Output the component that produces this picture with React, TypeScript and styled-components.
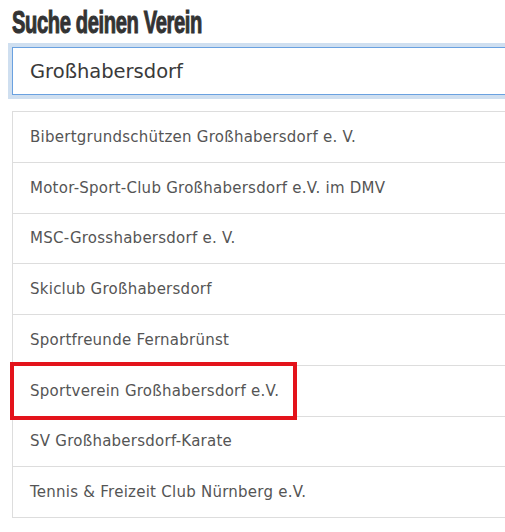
import React from 'react'
import styled, { createGlobalStyle } from 'styled-components'

const GlobalStyle = createGlobalStyle`
  html, body {
    margin: 0;
    padding: 0;
    background: #ffffff;
    overflow: hidden;
  }
`

const Page = styled.div`
  width: 505px;
  height: 532px;
  padding: 6px 0 0 12px;
  box-sizing: border-box;
  position: relative;
  overflow: hidden;
`

// condensed display face is not installed, so squeeze a bold sans
const Title = styled.h1`
  margin: 0;
  font-family: 'Liberation Sans', Arial, sans-serif;
  font-weight: 700;
  font-size: 32px;
  line-height: 32px;
  letter-spacing: -0.6px;
  color: #333333;
  -webkit-text-stroke: 1.1px #333333;
  white-space: nowrap;
  transform: scaleX(0.63);
  transform-origin: left center;
`

const SearchBox = styled.div`
  margin-top: 9px;
  width: 520px;
  height: 48px;
  box-sizing: border-box;
  border: 1px solid #6aa1e0;
  box-shadow: 0 0 0 4px #cfdff0;
  display: flex;
  align-items: center;
  padding-left: 17px;
  font-family: 'DejaVu Sans', sans-serif;
  font-size: 19.5px;
  color: #3a3a3a;
`

const List = styled.ul`
  list-style: none;
  margin: 16px 0 0 0;
  padding: 0;
  width: 520px;
  border: 1px solid #dddddd;
  border-right: none;
`

const Item = styled.li`
  height: 50.75px;
  box-sizing: border-box;
  display: flex;
  align-items: center;
  padding-left: 17px;
  border-top: 1px solid #dddddd;
  font-family: 'DejaVu Sans', sans-serif;
  font-size: 15px;
  letter-spacing: 0.25px;
  color: #555555;

  &:first-child {
    border-top: none;
    height: 49.75px;
  }
`

const Highlight = styled.div`
  position: absolute;
  left: 10px;
  top: 362px;
  width: 287px;
  height: 58px;
  box-sizing: border-box;
  border: 4px solid #e3131b;
`

const clubs = [
  'Bibertgrundschützen Großhabersdorf e. V.',
  'Motor-Sport-Club Großhabersdorf e.V. im DMV',
  'MSC-Grosshabersdorf e. V.',
  'Skiclub Großhabersdorf',
  'Sportfreunde Fernabrünst',
  'Sportverein Großhabersdorf e.V.',
  'SV Großhabersdorf-Karate',
  'Tennis & Freizeit Club Nürnberg e.V.',
]

export default function App() {
  return (
    <>
      <GlobalStyle />
      <Page>
        <Title>Suche deinen Verein</Title>
        <SearchBox>Großhabersdorf</SearchBox>
        <List>
          {clubs.map((c) => (
            <Item key={c}>{c}</Item>
          ))}
        </List>
        <Highlight />
      </Page>
    </>
  )
}
